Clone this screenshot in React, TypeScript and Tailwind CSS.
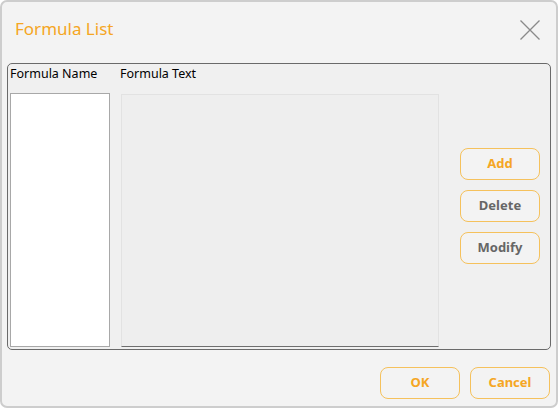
import React from "react";

export default function App() {
  const font = { fontFamily: '"Noto Sans", "Open Sans", sans-serif' };
  return (
    <div className="w-[560px] h-[409px] bg-white" style={font}>
      <div className="w-[558px] h-[408px] border-2 border-[#cdcdcd] rounded-[7px] bg-[#f3f3f3] flex flex-col">
        {/* header */}
        <div className="h-[61px] flex items-start justify-between">
          <div className="pl-[13px] pt-[14px] text-[17px] leading-[26px] text-[#f5a623]">Formula List</div>
          <svg className="mt-[17px] mr-[15px]" width="22" height="22" viewBox="0 0 22 22">
            <path d="M1.5 1.5 L20.5 20.5 M20.5 1.5 L1.5 20.5" stroke="#8a8a8a" strokeWidth="1.3" fill="none" />
          </svg>
        </div>
        {/* group box */}
        <div className="mx-[5px] h-[287px] border border-[#6a6a6a] rounded-[5px] bg-[#f0f0f0] flex">
          <div className="flex flex-col pl-[2px]">
            <div className="h-[29px] text-[12.5px] leading-[20px] text-black">Formula Name</div>
            <div className="w-[100px] h-[254px] bg-white border border-[#a8a8a8]" />
          </div>
          <div className="flex flex-col pl-[11px]">
            <div className="h-[30px] -ml-[1px] text-[12.5px] leading-[20px] text-black">Formula Text</div>
            <div className="w-[318px] h-[253px] bg-[#eeeeee] border border-[#e2e2e2] border-b-[#6e6e6e]" />
          </div>
          <div className="flex flex-col gap-[10px] pl-[21px] pt-[84px]">
            <button className="w-[80px] h-[32px] rounded-[8px] border border-[#f5c15c] bg-[#f3f3f3] text-[13px] font-bold text-[#f5a623]">Add</button>
            <button className="w-[80px] h-[32px] rounded-[8px] border border-[#f5c15c] bg-[#f3f3f3] text-[13px] font-bold text-[#666666]">Delete</button>
            <button className="w-[80px] h-[32px] rounded-[8px] border border-[#f5c15c] bg-[#f3f3f3] text-[13px] font-bold text-[#666666]">Modify</button>
          </div>
        </div>
        {/* footer */}
        <div className="flex-1 flex justify-end items-end gap-[10px] pr-[6px] pb-[7px]">
          <button className="w-[80px] h-[32px] rounded-[8px] border border-[#f5c15c] bg-[#f3f3f3] text-[13px] font-bold text-[#f5a623]">OK</button>
          <button className="w-[80px] h-[32px] rounded-[8px] border border-[#f5c15c] bg-[#f3f3f3] text-[13px] font-bold text-[#f5a623]">Cancel</button>
        </div>
      </div>
    </div>
  );
}
